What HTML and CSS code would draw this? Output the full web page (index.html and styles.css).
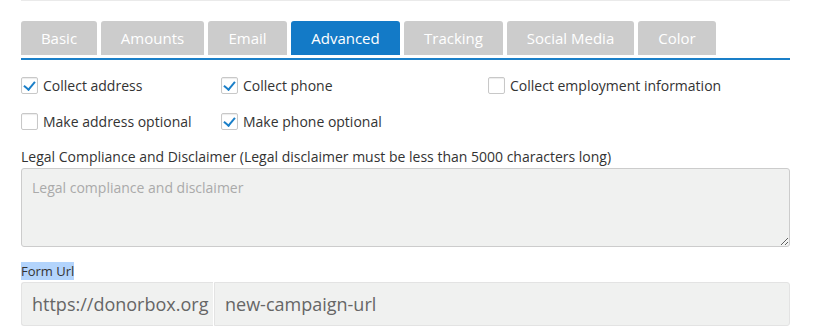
FILE: index.html
```html
<!DOCTYPE html>
<html lang="en">
<head>
    <meta charset="UTF-8">
    <meta name="viewport" content="width=device-width, initial-scale=1.0">
    <title>Campaign Settings</title>
    <link rel="stylesheet" href="styles.css">
</head>
<body>
    <div class="panel">
        <ul class="tabs">
            <li>Basic</li>
            <li>Amounts</li>
            <li>Email</li>
            <li class="active">Advanced</li>
            <li>Tracking</li>
            <li>Social Media</li>
            <li>Color</li>
        </ul>

        <div class="checks">
            <label class="check"><span class="box on"></span>Collect address</label>
            <label class="check"><span class="box on"></span>Collect phone</label>
            <label class="check"><span class="box"></span>Collect employment information</label>
            <label class="check"><span class="box"></span>Make address optional</label>
            <label class="check"><span class="box on"></span>Make phone optional</label>
        </div>

        <label class="field-label">Legal Compliance and Disclaimer (Legal disclaimer must be less than 5000 characters long)</label>
        <textarea class="area" placeholder="Legal compliance and disclaimer"></textarea>

        <label class="field-label small"><span class="sel">Form Url</span></label>
        <div class="url-group">
            <span class="addon">https://donorbox.org</span>
            <input class="url" type="text" value="new-campaign-url">
        </div>
    </div>
</body>
</html>
```

FILE: styles.css
```css
body { margin: 0; font-family: "Open Sans", Arial, sans-serif; color: #333; background: #fff; }
.panel { width: 769px; margin-left: 21px; border-top: 1px solid #eaeaea; padding-top: 20px; }

.tabs { list-style: none; margin: 0; padding: 0; display: flex; gap: 4px; border-bottom: 2px solid #1a7fc8; padding-bottom: 3px; }
.tabs li { height: 34px; line-height: 34px; background: #ccc; color: #fff; font-size: 15px; text-align: center; border-radius: 3px 3px 0 0; }
.tabs li:nth-child(1) { width: 76px; }
.tabs li:nth-child(2) { width: 103px; }
.tabs li:nth-child(3) { width: 79px; }
.tabs li:nth-child(4) { width: 109px; }
.tabs li:nth-child(5) { width: 99px; }
.tabs li:nth-child(6) { width: 127px; }
.tabs li:nth-child(7) { width: 78px; }
.tabs li.active { background: #137ac7; }

.checks { display: grid; grid-template-columns: 200px 267px auto; row-gap: 19px; margin-top: 17px; }
.check { display: flex; align-items: center; font-size: 14px; height: 17px; color: #333; }
.box { width: 15px; height: 15px; border: 1px solid #c8c8c8; border-radius: 2px; margin-right: 5px; box-shadow: inset 0 1px 1px rgba(0,0,0,0.08); position: relative; }
.box.on::after { content: ""; position: absolute; left: 4px; top: 1px; width: 5px; height: 9px; border: solid #1a7fc8; border-width: 0 2px 2px 0; transform: rotate(40deg); }

.field-label { display: block; font-size: 14px; margin-top: 17px; line-height: 20px; }
.area { display: block; box-sizing: border-box; width: 100%; height: 79px; margin-top: 1px; background: #f0f1f0; border: 1px solid #ccc; border-radius: 3px; padding: 9px 10px; font-family: "Open Sans", Arial, sans-serif; font-size: 14px; }
.area::placeholder { color: #aaa; }

.field-label.small { font-size: 13px; margin-top: 15px; line-height: 18px; }
.sel { background: #b3d4fc; }

.url-group { display: flex; margin-top: 2px; height: 44px; }
.addon { width: 192px; box-sizing: border-box; background: #f0f1f0; border: 1px solid #e3e3e3; border-right: none; border-radius: 3px 0 0 3px; font-size: 18px; color: #666; line-height: 42px; padding-left: 10px; }
.url { flex: 1; box-sizing: border-box; margin: 0; margin-left: 1px; background: #f0f1f0; border: 1px solid #e3e3e3; border-radius: 0 3px 3px 0; font-family: "Open Sans", Arial, sans-serif; font-size: 18px; color: #666; padding: 0 10px; outline: none; }
```
